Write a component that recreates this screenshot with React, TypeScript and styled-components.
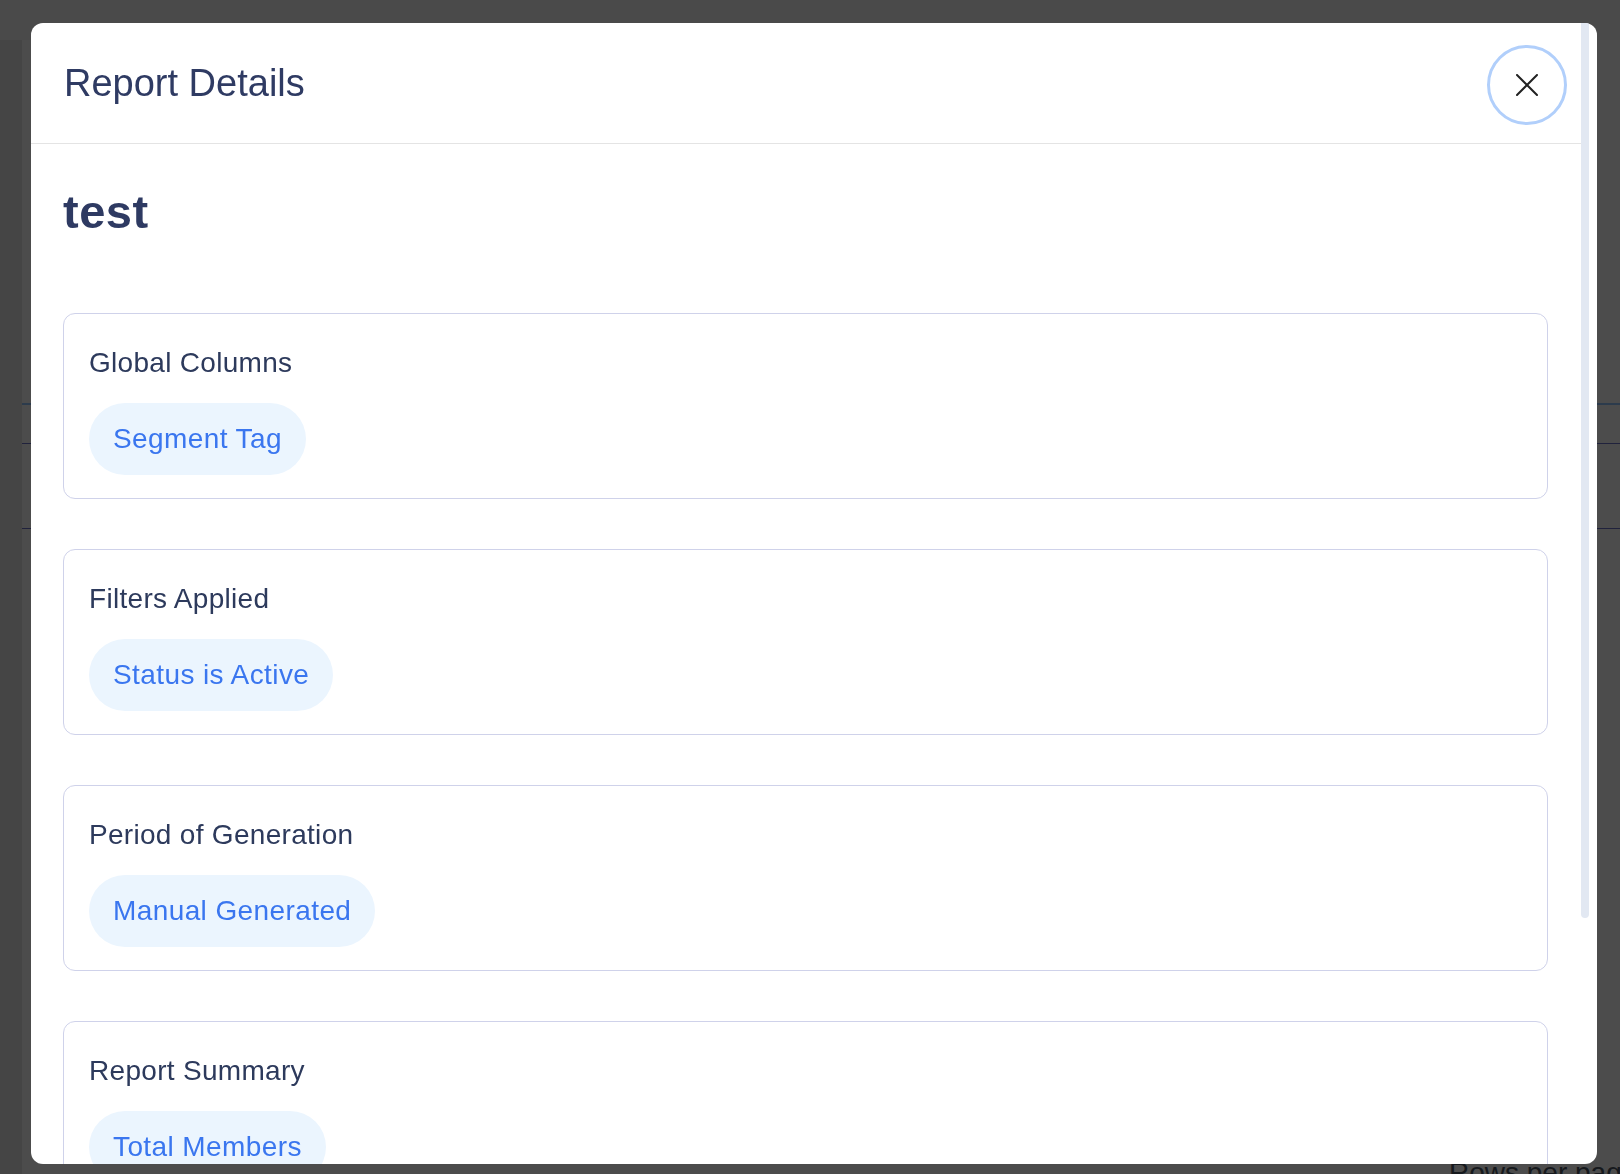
import styled, { createGlobalStyle } from 'styled-components';

const GlobalStyle = createGlobalStyle`
  html, body {
    margin: 0;
    padding: 0;
    height: 100%;
    overflow: hidden;
  }

  body {
    font-family: 'Liberation Sans', Arial, sans-serif;
    background: #fff;
  }
`;

interface Section {
  title: string;
  tags: string[];
}

const sections: Section[] = [
  { title: 'Global Columns', tags: ['Segment Tag'] },
  { title: 'Filters Applied', tags: ['Status is Active'] },
  { title: 'Period of Generation', tags: ['Manual Generated'] },
  { title: 'Report Summary', tags: ['Total Members'] },
  { title: 'Report Format', tags: ['CSV'] },
];

const CloseIcon = () => (
  <svg width='22' height='22' viewBox='0 0 22 22' fill='none'>
    <path d='M1 1L21 21M21 1L1 21' stroke='#222' strokeWidth='2' strokeLinecap='round' />
  </svg>
);

const App = () => {
  return (
    <>
      <GlobalStyle />
      {/* page behind the dialog */}
      <Page>
        <TopBar />
        <Layout>
          <Sidebar />
          <Main>
            <Tabs />
            <TableHead />
            <TableBody />
            <Footer>Rows per page:</Footer>
          </Main>
        </Layout>
      </Page>

      <Overlay>
        <Modal>
          <Content>
            <Header>
              <Title>Report Details</Title>
              <CloseButton aria-label='Close'>
                <CloseIcon />
              </CloseButton>
            </Header>

            <Body>
              <ReportName>test</ReportName>
              <Cards>
                {sections.map((section) => (
                  <Card key={section.title}>
                    <CardTitle>{section.title}</CardTitle>
                    <Tags>
                      {section.tags.map((tag, i) => (
                        <Tag key={tag + i}>{tag}</Tag>
                      ))}
                    </Tags>
                  </Card>
                ))}
              </Cards>
            </Body>
          </Content>

          <ScrollTrack>
            <ScrollThumb />
          </ScrollTrack>
        </Modal>
      </Overlay>
    </>
  );
};

export default App;

const Page = styled.div`
  height: 1174px;
  display: flex;
  flex-direction: column;
  background: #fff;
`;

const TopBar = styled.div`
  height: 40px;
  flex-shrink: 0;
  background: #f7f7f7;
`;

const Layout = styled.div`
  flex: 1;
  display: flex;
`;

const Sidebar = styled.aside`
  width: 22px;
  flex-shrink: 0;
  background: #e6e6e6;
`;

const Main = styled.main`
  flex: 1;
  min-width: 0;
  display: flex;
  flex-direction: column;
`;

const Tabs = styled.div`
  height: 363px;
  border-bottom: 2px solid #93c5fd;
  margin-bottom: 38px;
`;

const TableHead = styled.div`
  height: 84px;
  border-top: 1px solid #6b74c9;
  border-bottom: 1px solid #6b74c9;
`;

const TableBody = styled.div`
  height: 628px;
`;

const Footer = styled.div`
  padding-left: 1427px;
  font-size: 28px;
  line-height: 32px;
  color: #4b5563;
  white-space: nowrap;
  overflow: hidden;
`;

const Overlay = styled.div`
  position: fixed;
  inset: 0;
  box-sizing: border-box;
  padding: 23px 23px 10px 31px;
  display: flex;
  background: rgba(0, 0, 0, 0.7);
`;

const Modal = styled.div`
  flex: 1;
  display: flex;
  background: #fff;
  border-radius: 12px;
  overflow: hidden;
`;

const Content = styled.div`
  flex: 1;
  min-width: 0;
  overflow: hidden;
`;

const ScrollTrack = styled.div`
  width: 16px;
  flex-shrink: 0;
`;

const ScrollThumb = styled.div`
  width: 8px;
  height: 895px;
  background: #e2e8f2;
  border-radius: 0 0 4px 4px;
`;

const Header = styled.header`
  height: 120px;
  padding: 0 14px 0 33px;
  border-bottom: 1px solid #e4e4e4;

  display: flex;
  justify-content: space-between;
  align-items: center;
`;

const Title = styled.h2`
  margin: 0;
  font-size: 38px;
  font-weight: 400;
  line-height: 44px;
  color: #2f3b63;
`;

const CloseButton = styled.button`
  box-sizing: border-box;
  width: 80px;
  height: 80px;
  margin-top: 4px;
  padding: 0;
  border: 3px solid #b1cffb;
  border-radius: 50%;
  background: #fff;
  cursor: pointer;

  display: flex;
  justify-content: center;
  align-items: center;
`;

const Body = styled.div`
  padding: 40px 33px 32px 32px;
`;

const ReportName = styled.h1`
  margin: 0 0 73px;
  font-size: 47px;
  font-weight: 700;
  line-height: 1.2;
  letter-spacing: 0.5px;
  color: #2e3a62;
`;

const Cards = styled.div`
  display: flex;
  flex-direction: column;
  gap: 50px;
`;

const Card = styled.section`
  padding: 33px 24px 23px 25px;
  border: 1px solid #cfd2ea;
  border-radius: 12px;
`;

const CardTitle = styled.div`
  margin-bottom: 24px;
  font-size: 28px;
  line-height: 32px;
  letter-spacing: 0.3px;
  color: #2d3a5c;
`;

const Tags = styled.div`
  display: flex;
  flex-wrap: wrap;
  gap: 12px;
`;

const Tag = styled.span`
  padding: 20px 24px;
  font-size: 28px;
  line-height: 32px;
  letter-spacing: 0.4px;
  color: #3a76ef;
  background: #ebf5fe;
  border-radius: 999px;
`;
